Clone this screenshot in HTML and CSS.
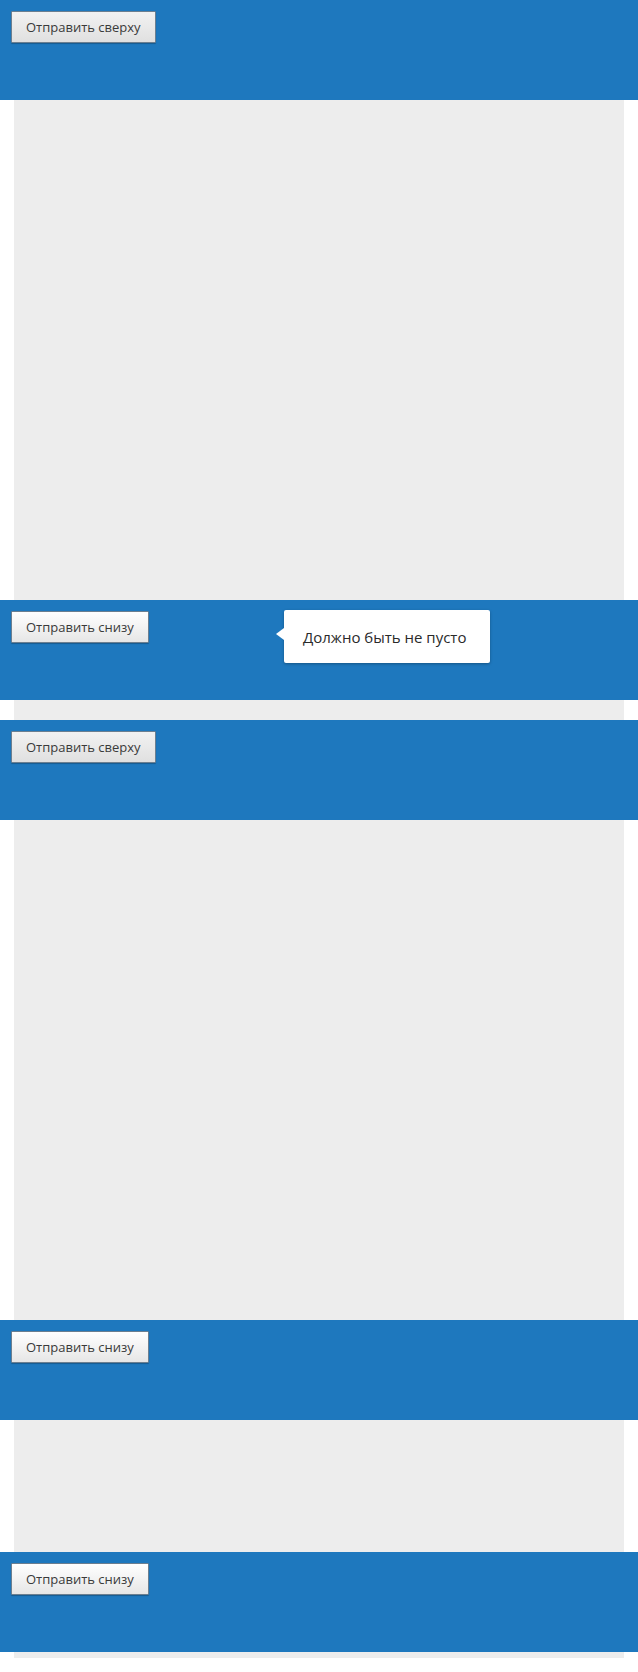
FILE: index.html
```html
<!DOCTYPE html>
<html lang="ru">
<head>
<meta charset="utf-8">
<title>Формы</title>
<link rel="stylesheet" href="styles.css">
</head>
<body>
<div class="page">
  <section class="bar">
    <button class="btn btn-pressed" type="button">Отправить сверху</button>
  </section>
  <div class="area area-tall"></div>
  <section class="bar">
    <button class="btn" type="button">Отправить снизу</button>
    <div class="tooltip">Должно быть не пусто</div>
  </section>
  <div class="area area-gap"></div>
  <section class="bar">
    <button class="btn btn-pressed" type="button">Отправить сверху</button>
  </section>
  <div class="area area-tall"></div>
  <section class="bar">
    <button class="btn" type="button">Отправить снизу</button>
  </section>
  <div class="area area-mid"></div>
  <section class="bar">
    <button class="btn" type="button">Отправить снизу</button>
  </section>
  <div class="area area-end"></div>
</div>
</body>
</html>
```
FILE: styles.css
```css
html, body {
  margin: 0;
  padding: 0;
  background: #ffffff;
}

body {
  font-family: "Open Sans", "Noto Sans", sans-serif;
}

.page {
  margin: 0 14px;
  background: #ededed;
}

.bar {
  position: relative;
  margin: 0 -14px;
  height: 100px;
  box-sizing: border-box;
  padding: 11px 0 0 11px;
  background: #1e78be;
}

.area-tall { height: 500px; }
.area-gap { height: 20px; }
.area-mid { height: 132px; }
.area-end { height: 6px; }

.btn {
  display: block;
  height: 32px;
  box-sizing: border-box;
  padding: 0 14px;
  border: 1px solid #6c7f90;
  border-radius: 1px;
  background: linear-gradient(#ffffff, #e6e6e6);
  box-shadow: 0 1px 1px rgba(0, 0, 0, 0.25);
  font-family: "Open Sans", "Noto Sans", sans-serif;
  font-size: 13px;
  color: #3a3a3a;
  cursor: pointer;
}

.btn-pressed {
  background: linear-gradient(#f2f2f2, #e0e0e0);
}

.tooltip {
  position: absolute;
  left: 284px;
  top: 10px;
  width: 206px;
  height: 53px;
  box-sizing: border-box;
  padding: 0 0 0 19px;
  display: flex;
  align-items: center;
  background: #ffffff;
  border-radius: 2px;
  box-shadow: 0 1px 3px rgba(0, 0, 0, 0.3);
  font-size: 15px;
  color: #2a2a2a;
}

.tooltip::before {
  content: "";
  position: absolute;
  left: -8px;
  top: 18px;
  border-style: solid;
  border-width: 6px 8px 6px 0;
  border-color: transparent #ffffff transparent transparent;
}
```
